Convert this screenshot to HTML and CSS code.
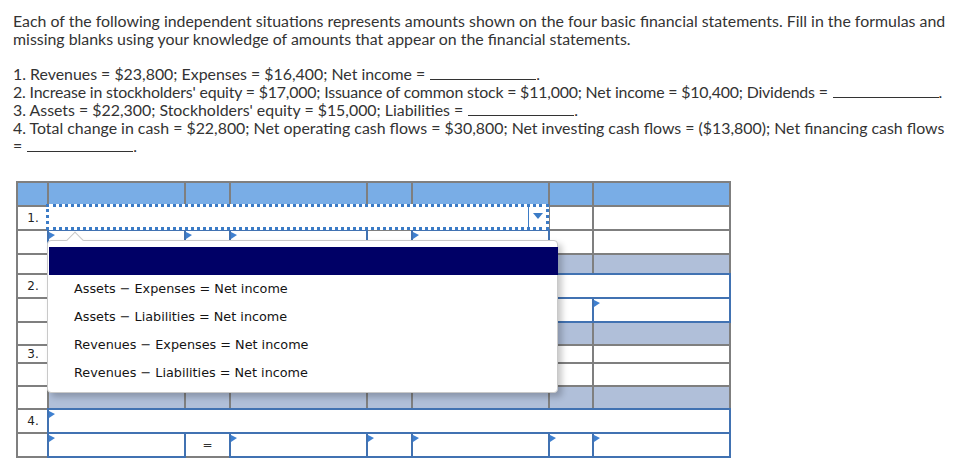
FILE: index.html
```html
<!DOCTYPE html>
<html>
<head>
<meta charset="utf-8">
<link rel="stylesheet" href="styles.css">
</head>
<body>
<div class="page">
  <div class="intro">
    <p class="lead">Each of the following independent situations represents amounts shown on the four basic financial statements. Fill in the formulas and<br>missing blanks using your knowledge of amounts that appear on the financial statements.</p>
    <div class="items">
      <div class="item">1. Revenues = $23,800; Expenses = $16,400; Net income = <span class="blank"></span>.</div>
      <div class="item tight">2. Increase in stockholders' equity = $17,000; Issuance of common stock = $11,000; Net income = $10,400; Dividends = <span class="blank"></span>.</div>
      <div class="item">3. Assets = $22,300; Stockholders' equity = $15,000; Liabilities = <span class="blank"></span>.</div>
      <div class="item">4. Total change in cash = $22,800; Net operating cash flows = $30,800; Net investing cash flows = ($13,800); Net financing cash flows<br>= <span class="blank"></span>.</div>
    </div>
  </div>

  <div class="sheet-wrap">
    <div class="sheet">
      <!-- header -->
      <div class="hd"></div><div class="hd"></div><div class="hd"></div><div class="hd"></div><div class="hd"></div><div class="hd"></div><div class="hd"></div><div class="hd"></div>
      <!-- row 1 -->
      <div class="lab">1.</div>
      <div class="dd"><div class="dd-btn"><span class="dd-arrow"></span></div></div>
      <div class="cell"></div><div class="cell"></div>
      <!-- row 2 -->
      <div class="lab"></div>
      <div class="in"></div><div class="in"></div><div class="in"></div><div class="cell op">=</div><div class="in"></div>
      <div class="cell"></div><div class="cell"></div>
      <!-- row 3 grey -->
      <div class="lab"></div>
      <div class="grey"></div><div class="grey"></div><div class="grey"></div><div class="grey"></div><div class="grey"></div><div class="grey"></div><div class="grey"></div>
      <!-- row 4 -->
      <div class="lab">2.</div>
      <div class="in span7"></div>
      <!-- row 5 -->
      <div class="lab"></div>
      <div class="in"></div><div class="in"></div><div class="in"></div><div class="cell op">=</div><div class="in"></div><div class="in"></div><div class="in"></div>
      <!-- row 6 grey -->
      <div class="lab"></div>
      <div class="grey"></div><div class="grey"></div><div class="grey"></div><div class="grey"></div><div class="grey"></div><div class="grey"></div><div class="grey"></div>
      <!-- row 7 -->
      <div class="lab">3.</div>
      <div class="cell"></div><div class="cell"></div><div class="cell"></div><div class="cell"></div><div class="cell"></div><div class="cell"></div><div class="cell"></div>
      <!-- row 8 -->
      <div class="lab"></div>
      <div class="cell"></div><div class="cell"></div><div class="cell"></div><div class="cell"></div><div class="cell"></div><div class="cell"></div><div class="cell"></div>
      <!-- row 9 grey -->
      <div class="lab"></div>
      <div class="grey"></div><div class="grey"></div><div class="grey"></div><div class="grey"></div><div class="grey"></div><div class="grey"></div><div class="grey"></div>
      <!-- row 10 -->
      <div class="lab">4.</div>
      <div class="in span7"></div>
      <!-- row 11 -->
      <div class="lab"></div>
      <div class="in"></div><div class="cell op">=</div><div class="in"></div><div class="in"></div><div class="in"></div><div class="in"></div><div class="in"></div>
    </div>

    <div class="popup">
      <div class="popup-bar"></div>
      <div class="opt">Assets − Expenses = Net income</div>
      <div class="opt">Assets − Liabilities = Net income</div>
      <div class="opt">Revenues − Expenses = Net income</div>
      <div class="opt">Revenues − Liabilities = Net income</div>
    </div>
  </div>
</div>
</body>
</html>
```

FILE: styles.css
```css
html, body {
  margin: 0;
  padding: 0;
  background: #fff;
}

.page {
  padding: 12px 0 0 13px;
}

.intro {
  font-family: Lato, "Open Sans", sans-serif;
  font-size: 15.9px;
  line-height: 18px;
  color: #333;
}

.lead {
  margin: 0;
  white-space: nowrap;
}

.items {
  margin-top: 17px;
}

.item {
  white-space: nowrap;
}

.tight {
  letter-spacing: -0.18px;
}

.blank {
  display: inline-block;
  width: 106px;
  height: 10px;
  border-bottom: 1px solid #333;
  margin-left: 1px;
}

.sheet-wrap {
  position: relative;
  margin-top: 26px;
  margin-left: 3px;
  width: max-content;
}

.sheet {
  display: grid;
  grid-template-columns: 29px 135px 43px 135px 43px 135px 42px 135px;
  grid-template-rows: 22px 22px 22px 18px 22px 22px 21px 16px 21px 21px 22px 22px;
  gap: 2px;
  padding: 2px;
  background: #7f7f7f;
  width: max-content;
  font-family: "DejaVu Sans", Verdana, sans-serif;
  font-size: 12px;
  color: #222;
}

.hd {
  background: #79ade6;
}

.lab {
  background: #fff;
  display: flex;
  align-items: center;
  justify-content: center;
  padding-left: 1px;
}

.cell {
  background: #fff;
}

.op {
  display: flex;
  align-items: center;
  justify-content: center;
  color: #333;
}

.grey {
  background: #b0bfd9;
}

.in {
  position: relative;
  background: #fff;
  box-shadow: 0 0 0 2px #4172b2;
}

.in::before {
  content: "";
  position: absolute;
  left: 0;
  top: 1px;
  border-left: 6px solid #3f80d0;
  border-top: 3px solid transparent;
  border-bottom: 4px solid transparent;
}

.span7 {
  grid-column: span 7;
}

.dd {
  grid-column: span 5;
  position: relative;
  z-index: 2;
  margin: -3px -1px -1px -3px;
  border: 3px dotted #3b7bc6;
  background: #fff;
  display: flex;
  justify-content: flex-end;
}

.dd-btn {
  width: 17px;
  border-left: 1px solid #3b7bc6;
  display: flex;
  align-items: center;
  justify-content: center;
}

.dd-arrow {
  width: 0;
  height: 0;
  border-top: 6px solid #3b7bc6;
  border-left: 5px solid transparent;
  border-right: 5px solid transparent;
  margin-top: -2px;
}

.popup {
  position: absolute;
  left: 31px;
  top: 59px;
  width: 511px;
  height: 153px;
  box-sizing: border-box;
  background: #fff;
  border: 1px solid #c9c9c9;
  border-radius: 4px;
  box-shadow: 4px 4px 6px rgba(0, 0, 0, 0.22);
  padding: 6px 0;
  z-index: 5;
  font-family: "DejaVu Sans", Verdana, sans-serif;
  font-size: 12.8px;
  color: #141414;
}

.popup::before {
  content: "";
  position: absolute;
  left: 21px;
  top: -7px;
  width: 12px;
  height: 12px;
  box-sizing: border-box;
  background: #fff;
  border-left: 1px solid #c9c9c9;
  border-top: 1px solid #c9c9c9;
  transform: rotate(45deg);
}

.popup-bar {
  position: relative;
  z-index: 1;
  height: 28px;
  margin-left: 1px;
  margin-right: -1px;
  background: #000066;
}

.opt {
  height: 28px;
  line-height: 28px;
  padding-left: 26px;
  white-space: nowrap;
}
```
